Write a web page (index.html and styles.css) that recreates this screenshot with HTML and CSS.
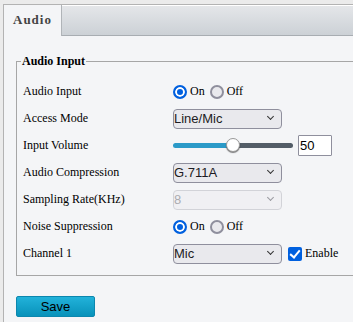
FILE: index.html
```html
<!DOCTYPE html>
<html lang="en">
<head>
  <meta charset="UTF-8">
  <meta name="viewport" content="width=device-width, initial-scale=1.0">
  <title>Audio</title>
  <link rel="stylesheet" href="styles.css">
</head>
<body>
  <div class="panel">
    <div class="tabs">
      <div class="tab active">Audio</div>
      <div class="tab-rest"></div>
    </div>

    <div class="content">
      <fieldset class="group">
        <legend>Audio Input</legend>

        <div class="row">
          <span class="label">Audio Input</span>
          <div class="ctrl">
            <input type="radio" name="audioIn" class="radio" checked><span class="opt">On</span>
            <input type="radio" name="audioIn" class="radio"><span class="opt">Off</span>
          </div>
        </div>

        <div class="row">
          <span class="label">Access Mode</span>
          <div class="ctrl">
            <span class="sel"><select><option>Line/Mic</option></select></span>
          </div>
        </div>

        <div class="row">
          <span class="label">Input Volume</span>
          <div class="ctrl">
            <input type="range" class="slider" min="0" max="100" value="50">
            <input type="text" class="num" value="50">
          </div>
        </div>

        <div class="row">
          <span class="label">Audio Compression</span>
          <div class="ctrl">
            <span class="sel"><select><option>G.711A</option></select></span>
          </div>
        </div>

        <div class="row">
          <span class="label">Sampling Rate(KHz)</span>
          <div class="ctrl">
            <span class="sel disabled"><select disabled><option>8</option></select></span>
          </div>
        </div>

        <div class="row">
          <span class="label">Noise Suppression</span>
          <div class="ctrl">
            <input type="radio" name="noise" class="radio" checked><span class="opt">On</span>
            <input type="radio" name="noise" class="radio"><span class="opt">Off</span>
          </div>
        </div>

        <div class="row">
          <span class="label">Channel 1</span>
          <div class="ctrl">
            <span class="sel"><select><option>Mic</option></select></span>
            <input type="checkbox" class="check" checked><span class="opt">Enable</span>
          </div>
        </div>
      </fieldset>

      <button class="btn-save">Save</button>
    </div>
  </div>
</body>
</html>
```

FILE: styles.css
```css
* {
  box-sizing: border-box;
}
body {
  margin: 0;
  background: #ebebeb;
  font-family: "Liberation Serif", "Times New Roman", serif;
  font-size: 12px;
  color: #000;
  overflow: hidden;
}
.panel {
  margin: 4px 0 0 3px;
  border-top: 1px solid #b3b3b3;
  border-left: 1px solid #b3b3b3;
  background: #f4f5f7;
  height: 318px;
  overflow: hidden;
}
.tabs {
  display: flex;
  height: 31px;
}
.tab {
  width: 58px;
  padding-left: 9px;
  line-height: 30px;
  font-size: 13px;
  font-weight: bold;
  letter-spacing: 1px;
  color: #444;
  border-right: 1px solid #b0b4b8;
}
.tab-rest {
  flex: 1;
  border-top: 1px solid #fff;
  border-bottom: 1px solid #a8adb2;
  background: linear-gradient(#e4e6e9, #ccd1d6);
}
.content {
  padding: 18px 0 0 12px;
}
.group {
  width: 420px;
  margin: 0;
  padding: 9px 6px 8px 6px;
  border: 1px solid #a6a6a6;
}
.group legend {
  padding: 0 1px;
  margin-left: -2px;
  font-weight: bold;
  font-size: 12px;
}
.row {
  display: flex;
  align-items: center;
  height: 27px;
}
.label {
  width: 150px;
}
.ctrl {
  display: flex;
  align-items: center;
}
.opt {
  margin-right: 5px;
}

/* radios and checkbox */
.radio {
  appearance: none;
  width: 14px;
  height: 14px;
  margin: 0 3px 0 0;
  border: 2px solid #8f8f9d;
  border-radius: 50%;
  background: #e9e9ed;
}
.radio:checked {
  border-color: #0060df;
  background: #0060df;
  box-shadow: inset 0 0 0 2px #fff;
}
.check {
  appearance: none;
  position: relative;
  width: 14px;
  height: 14px;
  margin: 0 3px 0 6px;
  border-radius: 2px;
  background: #0060df;
}
.check:checked::after {
  content: "";
  position: absolute;
  left: 4px;
  top: 1px;
  width: 4px;
  height: 8px;
  border-right: 2px solid #fff;
  border-bottom: 2px solid #fff;
  transform: rotate(40deg);
}

/* selects */
.sel {
  position: relative;
  display: inline-block;
}
.sel select {
  appearance: none;
  display: block;
  width: 109px;
  height: 20px;
  padding: 0 18px 0 0;
  border: 1px solid #8f8f9d;
  border-radius: 4px;
  background: #e9e9ed;
  font-family: "Liberation Sans", Arial, sans-serif;
  font-size: 13px;
  color: #1c1b22;
}
.sel::after {
  content: "";
  position: absolute;
  right: 9px;
  top: 5px;
  width: 4px;
  height: 4px;
  border-right: 1.5px solid #333;
  border-bottom: 1.5px solid #333;
  transform: rotate(45deg);
}
.sel.disabled select {
  color: #8d8d93;
  border-color: #c5c5cc;
  background: #efeff2;
}
.sel.disabled::after {
  border-color: #9a9aa0;
}

/* volume */
.slider {
  -webkit-appearance: none;
  appearance: none;
  width: 120px;
  height: 16px;
  margin: 0;
  background: transparent;
}
.slider::-webkit-slider-runnable-track {
  height: 5px;
  border-radius: 3px;
  background: linear-gradient(to right, #2b9ac8 50%, #535d67 50%);
}
.slider::-webkit-slider-thumb {
  -webkit-appearance: none;
  width: 14px;
  height: 14px;
  margin-top: -5px;
  border: 1px solid #9a9a9a;
  border-radius: 50%;
  background: #fff;
  box-shadow: 0 1px 1px rgba(0,0,0,0.5);
}
.num {
  width: 34px;
  height: 21px;
  margin-left: 5px;
  padding: 0 1px;
  border: 1px solid #8f8f9d;
  border-radius: 1px;
  background: #fff;
  font-family: "Liberation Sans", Arial, sans-serif;
  font-size: 13px;
  color: #000;
}

.btn-save {
  display: block;
  width: 79px;
  height: 21px;
  margin-top: 20px;
  padding: 0;
  border: 1px solid #0c87ae;
  border-radius: 2px;
  background: linear-gradient(#22b2da, #0892ba);
  font-family: "Liberation Sans", Arial, sans-serif;
  font-size: 13px;
  color: #000;
}
```
